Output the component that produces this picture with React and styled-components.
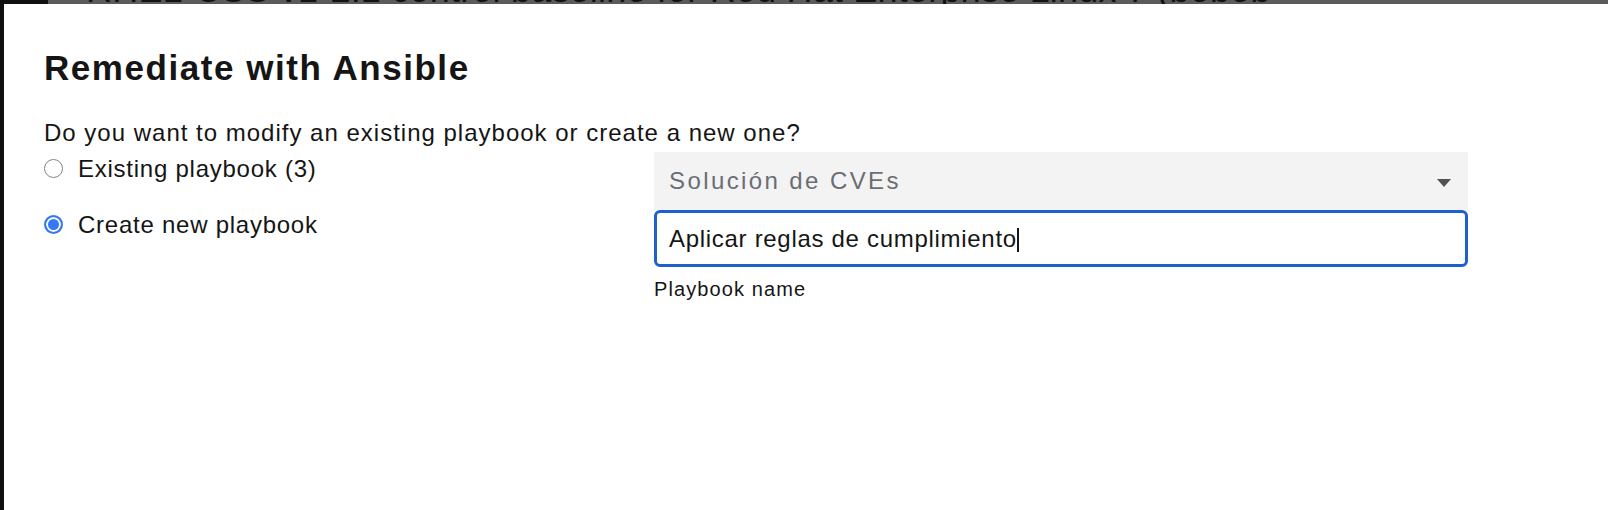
import React from 'react'
import styled, { createGlobalStyle } from 'styled-components'

const GlobalStyle = createGlobalStyle`
  html, body {
    margin: 0;
    padding: 0;
    height: 100%;
  }
  body {
    font-family: "Liberation Sans", Arial, sans-serif;
    background: #101010;
    overflow: hidden;
  }
  #root {
    height: 100%;
  }
`

function App() {
  return (
    <Screen>
      <GlobalStyle />
      <Sidebar />
      <Main>
        <PageHeading>RHEL-CSS v1-2.1 control baseline for Red Hat Enterprise Linux 7 (bobob</PageHeading>
      </Main>

      <Modal>
        <Title>Remediate with Ansible</Title>
        <Question>Do you want to modify an existing playbook or create a new one?</Question>
        <Choices>
          <RadioGroup>
            <RadioRow>
              <Radio />
              <RadioLabel>Existing playbook (3)</RadioLabel>
            </RadioRow>
            <RadioRow>
              <Radio checked />
              <RadioLabel>Create new playbook</RadioLabel>
            </RadioRow>
          </RadioGroup>
          <Fields>
            <Select>
              <SelectText>Solución de CVEs</SelectText>
              <Caret width="14" height="8" viewBox="0 0 14 8">
                <polygon points="0,0 14,0 7,8" fill="#4f5255" />
              </Caret>
            </Select>
            <TextField>
              <FieldValue>Aplicar reglas de cumplimiento</FieldValue>
              <Cursor />
            </TextField>
            <HelperText>Playbook name</HelperText>
          </Fields>
        </Choices>
      </Modal>
    </Screen>
  )
}

export default App

const Screen = styled.div`
    position: relative;
    display: flex;
    width: 100vw;
    height: 100vh;
    overflow: hidden;
`

const Sidebar = styled.div`
    flex: none;
    width: 48px;
    background: #101010;
`

const Main = styled.div`
    flex: 1;
    background: #5b5b5b;
    overflow: hidden;
`

const PageHeading = styled.div`
    margin: -30px 0 0 38px;
    font-size: 36px;
    line-height: 40px;
    letter-spacing: 0.2px;
    color: #121212;
    white-space: nowrap;
`

const Modal = styled.div`
    position: absolute;
    top: 4px;
    left: 4px;
    right: 0;
    bottom: 0;
    background: #ffffff;
    padding: 43px 0 0 40px;
    color: #151515;
`

const Title = styled.h1`
    margin: 0;
    font-size: 35px;
    line-height: 41px;
    font-weight: 700;
    letter-spacing: 1.55px;
`

const Question = styled.p`
    margin: 30px 0 0;
    font-size: 24px;
    line-height: 30px;
    letter-spacing: 1px;
`

const Choices = styled.div`
    display: grid;
    grid-template-columns: 610px 814px;
`

const RadioGroup = styled.div`
    display: flex;
    flex-direction: column;
    gap: 26px;
    padding-top: 6px;
`

const RadioRow = styled.label`
    display: flex;
    align-items: center;
    gap: 15px;
    height: 30px;
`

const Radio = styled.span`
    box-sizing: border-box;
    flex: none;
    width: 19px;
    height: 19px;
    border-radius: 50%;
    border: ${props => props.checked ? '2px solid #3478f6' : '1.5px solid #858585'};
    background: ${props => props.checked ? '#3478f6' : '#ffffff'};
    box-shadow: ${props => props.checked ? 'inset 0 0 0 2px #ffffff' : 'none'};
    margin-top: -1px;
`

const RadioLabel = styled.span`
    font-size: 24px;
    line-height: 30px;
    letter-spacing: 0.75px;
`

const Fields = styled.div`
    display: flex;
    flex-direction: column;
    padding-top: 4px;
`

const Select = styled.div`
    display: flex;
    align-items: center;
    justify-content: space-between;
    height: 58px;
    padding: 0 17px 0 15px;
    background: #f3f3f3;
`

const SelectText = styled.span`
    font-size: 24px;
    letter-spacing: 2.4px;
    color: #6a6e73;
`

const Caret = styled.svg`
    display: block;
    margin-top: 4px;
`

const TextField = styled.div`
    box-sizing: border-box;
    display: flex;
    align-items: center;
    height: 57px;
    padding: 0 12px;
    border: 3px solid #1f61cb;
    border-radius: 6px;
`

const FieldValue = styled.span`
    font-size: 24px;
    letter-spacing: 0.7px;
    color: #151515;
`

const Cursor = styled.span`
    width: 2px;
    height: 24px;
    margin-top: 2px;
    background: #151515;
`

const HelperText = styled.div`
    margin-top: 9px;
    font-size: 20px;
    line-height: 26px;
    letter-spacing: 1.1px;
    color: #151515;
`
